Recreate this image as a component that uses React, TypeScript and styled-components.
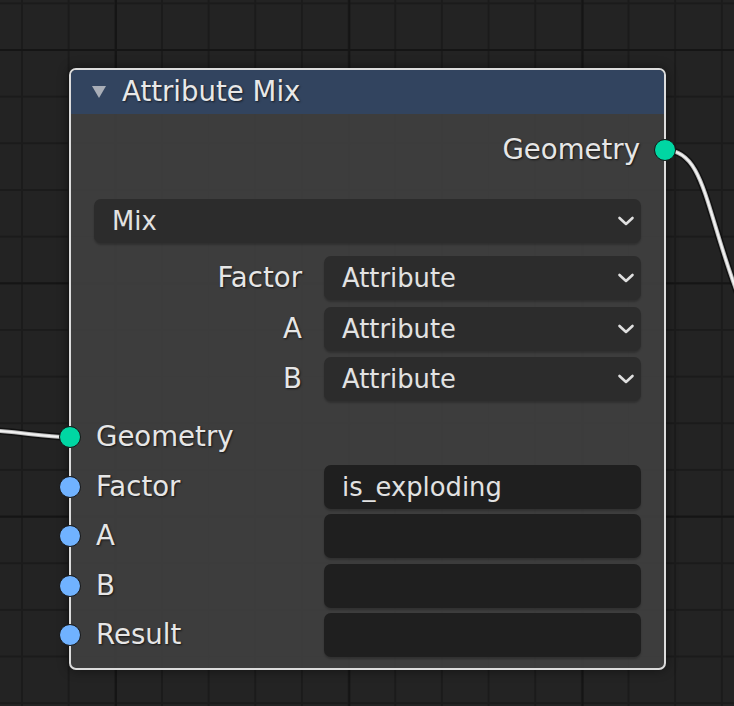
import { Fragment } from "react";
import styled, { createGlobalStyle } from "styled-components";

const GlobalStyle = createGlobalStyle`
  html, body {
    margin: 0;
    padding: 0;
    background: #232323;
  }
  body {
    font-family: "DejaVu Sans", "Liberation Sans", sans-serif;
    color: #e6e6e6;
  }
`;

const Canvas = styled.div`
  position: relative;
  width: 734px;
  height: 706px;
  overflow: hidden;
  background-color: #232323;
  background-image:
    linear-gradient(to right, #151515 2px, transparent 2px),
    linear-gradient(to bottom, #151515 2px, transparent 2px),
    linear-gradient(to right, #1b1b1b 2px, transparent 2px),
    linear-gradient(to bottom, #1b1b1b 2px, transparent 2px);
  background-size:
    233.333px 233.333px,
    233.333px 233.333px,
    46.667px 46.667px,
    46.667px 46.667px;
  background-position:
    115px 49px,
    115px 49px,
    21px 49px,
    21px 49px;
`;

const Wires = styled.svg`
  position: absolute;
  left: 0;
  top: 0;
  width: 734px;
  height: 706px;
  pointer-events: none;
`;

const Node = styled.div`
  position: absolute;
  left: 69px;
  top: 68px;
  width: 597px;
  box-sizing: border-box;
  border: 2px solid #dcdcdc;
  border-radius: 7px;
  background: rgba(64, 64, 64, 0.9);
  box-shadow: 0 0 12px rgba(0, 0, 0, 0.45);
`;

const Header = styled.div`
  display: flex;
  align-items: center;
  gap: 16px;
  height: 44px;
  padding-left: 21px;
  border-radius: 5px 5px 0 0;
  background: rgba(50, 69, 98, 0.93);
`;

const Title = styled.span`
  font-size: 27.6px;
  line-height: 1;
  color: #e8e8e8;
  text-shadow: 1px 1px 2px rgba(0, 0, 0, 0.6);
`;

const Body = styled.div`
  display: flex;
  flex-direction: column;
  padding: 0 23px 11px 23px;
`;

const OutputRow = styled.div`
  position: relative;
  display: flex;
  align-items: center;
  justify-content: flex-end;
  height: 44px;
  margin-top: 14px;
  padding-right: 1px;
`;

const Label = styled.span<{ $align?: "left" | "right" }>`
  font-size: 27.6px;
  line-height: 1;
  color: #e6e6e6;
  text-align: ${(p) => p.$align ?? "left"};
  text-shadow: 1px 1px 2px rgba(0, 0, 0, 0.65);
  white-space: nowrap;
`;

const Socket = styled.span<{ $side: "left" | "right"; $color: string }>`
  position: absolute;
  top: 50%;
  ${(p) => p.$side}: -35px;
  width: 22px;
  height: 22px;
  margin-top: -11px;
  box-sizing: border-box;
  border-radius: 50%;
  border: 1.5px solid #151515;
  background: ${(p) => p.$color};
`;

const Select = styled.div<{ $top?: number }>`
  display: flex;
  align-items: center;
  justify-content: space-between;
  height: 44px;
  margin-top: ${(p) => p.$top ?? 0}px;
  padding: 0 6px 0 18px;
  box-sizing: border-box;
  border-radius: 7px;
  background: #2c2c2c;
  box-shadow: 0 2px 2px rgba(0, 0, 0, 0.22);
  font-size: 25.8px;
  color: #e2e2e2;
`;

const Field = styled.div`
  display: flex;
  align-items: center;
  height: 44px;
  padding: 0 18px;
  box-sizing: border-box;
  border-radius: 7px;
  background: #1f1f1f;
  box-shadow: 0 2px 2px rgba(0, 0, 0, 0.2);
  font-size: 25.8px;
  color: #e2e2e2;
`;

const PropGrid = styled.div`
  display: grid;
  grid-template-columns: 1fr 317px;
  column-gap: 22px;
  row-gap: 6.5px;
  margin-top: 13px;
  align-items: center;
`;

const InputList = styled.div`
  display: flex;
  flex-direction: column;
  gap: 5.5px;
  margin-top: 14px;
`;

const InputRow = styled.div`
  position: relative;
  display: grid;
  grid-template-columns: 1fr 317px;
  column-gap: 22px;
  align-items: center;
  height: 44px;
  padding-left: 2px;
`;

const GEOMETRY = "#00d6a3";
const STRING = "#70b2ff";

function Chevron() {
  return (
    <svg width="18" height="12" viewBox="0 0 18 12">
      <path
        d="M2.5 3 L9 9 L15.5 3"
        fill="none"
        stroke="#e0e0e0"
        strokeWidth="2.6"
        strokeLinecap="round"
        strokeLinejoin="round"
      />
    </svg>
  );
}

function Collapse() {
  return (
    <svg width="14" height="12" viewBox="0 0 14 12">
      <polygon points="0,0 14,0 7,12" fill="#a9aeb7" />
    </svg>
  );
}

const modes = ["Factor", "A", "B"];
const inputs = [
  { name: "Geometry", color: GEOMETRY, value: null },
  { name: "Factor", color: STRING, value: "is_exploding" },
  { name: "A", color: STRING, value: "" },
  { name: "B", color: STRING, value: "" },
  { name: "Result", color: STRING, value: "" },
];

function Wire({ d }: { d: string }) {
  return (
    <>
      <path d={d} fill="none" stroke="rgba(0,0,0,0.5)" strokeWidth="7" />
      <path d={d} fill="none" stroke="#bdbdbd" strokeWidth="4" />
      <path d={d} fill="none" stroke="#f2f2f2" strokeWidth="2" />
    </>
  );
}

export default function App() {
  return (
    <>
      <GlobalStyle />
      <Canvas>
        <Wires viewBox="0 0 734 706">
          <Wire d="M665 150 C705 150, 705 210, 740 300" />
          <Wire d="M-40 429 C20 430, 35 437, 70 437" />
        </Wires>
        <Node>
          <Header>
            <Collapse />
            <Title>Attribute Mix</Title>
          </Header>
          <Body>
            <OutputRow>
              <Label>Geometry</Label>
              <Socket $side="right" $color={GEOMETRY} />
            </OutputRow>

            <Select $top={27}>
              <span>Mix</span>
              <Chevron />
            </Select>

            <PropGrid>
              {modes.map((m) => (
                <Fragment key={m}>
                  <Label $align="right">{m}</Label>
                  <Select>
                    <span>Attribute</span>
                    <Chevron />
                  </Select>
                </Fragment>
              ))}
            </PropGrid>

            <InputList>
              {inputs.map((inp) => (
                <InputRow key={inp.name}>
                  <Socket $side="left" $color={inp.color} />
                  <Label>{inp.name}</Label>
                  {inp.value !== null && <Field>{inp.value}</Field>}
                </InputRow>
              ))}
            </InputList>
          </Body>
        </Node>
      </Canvas>
    </>
  );
}
